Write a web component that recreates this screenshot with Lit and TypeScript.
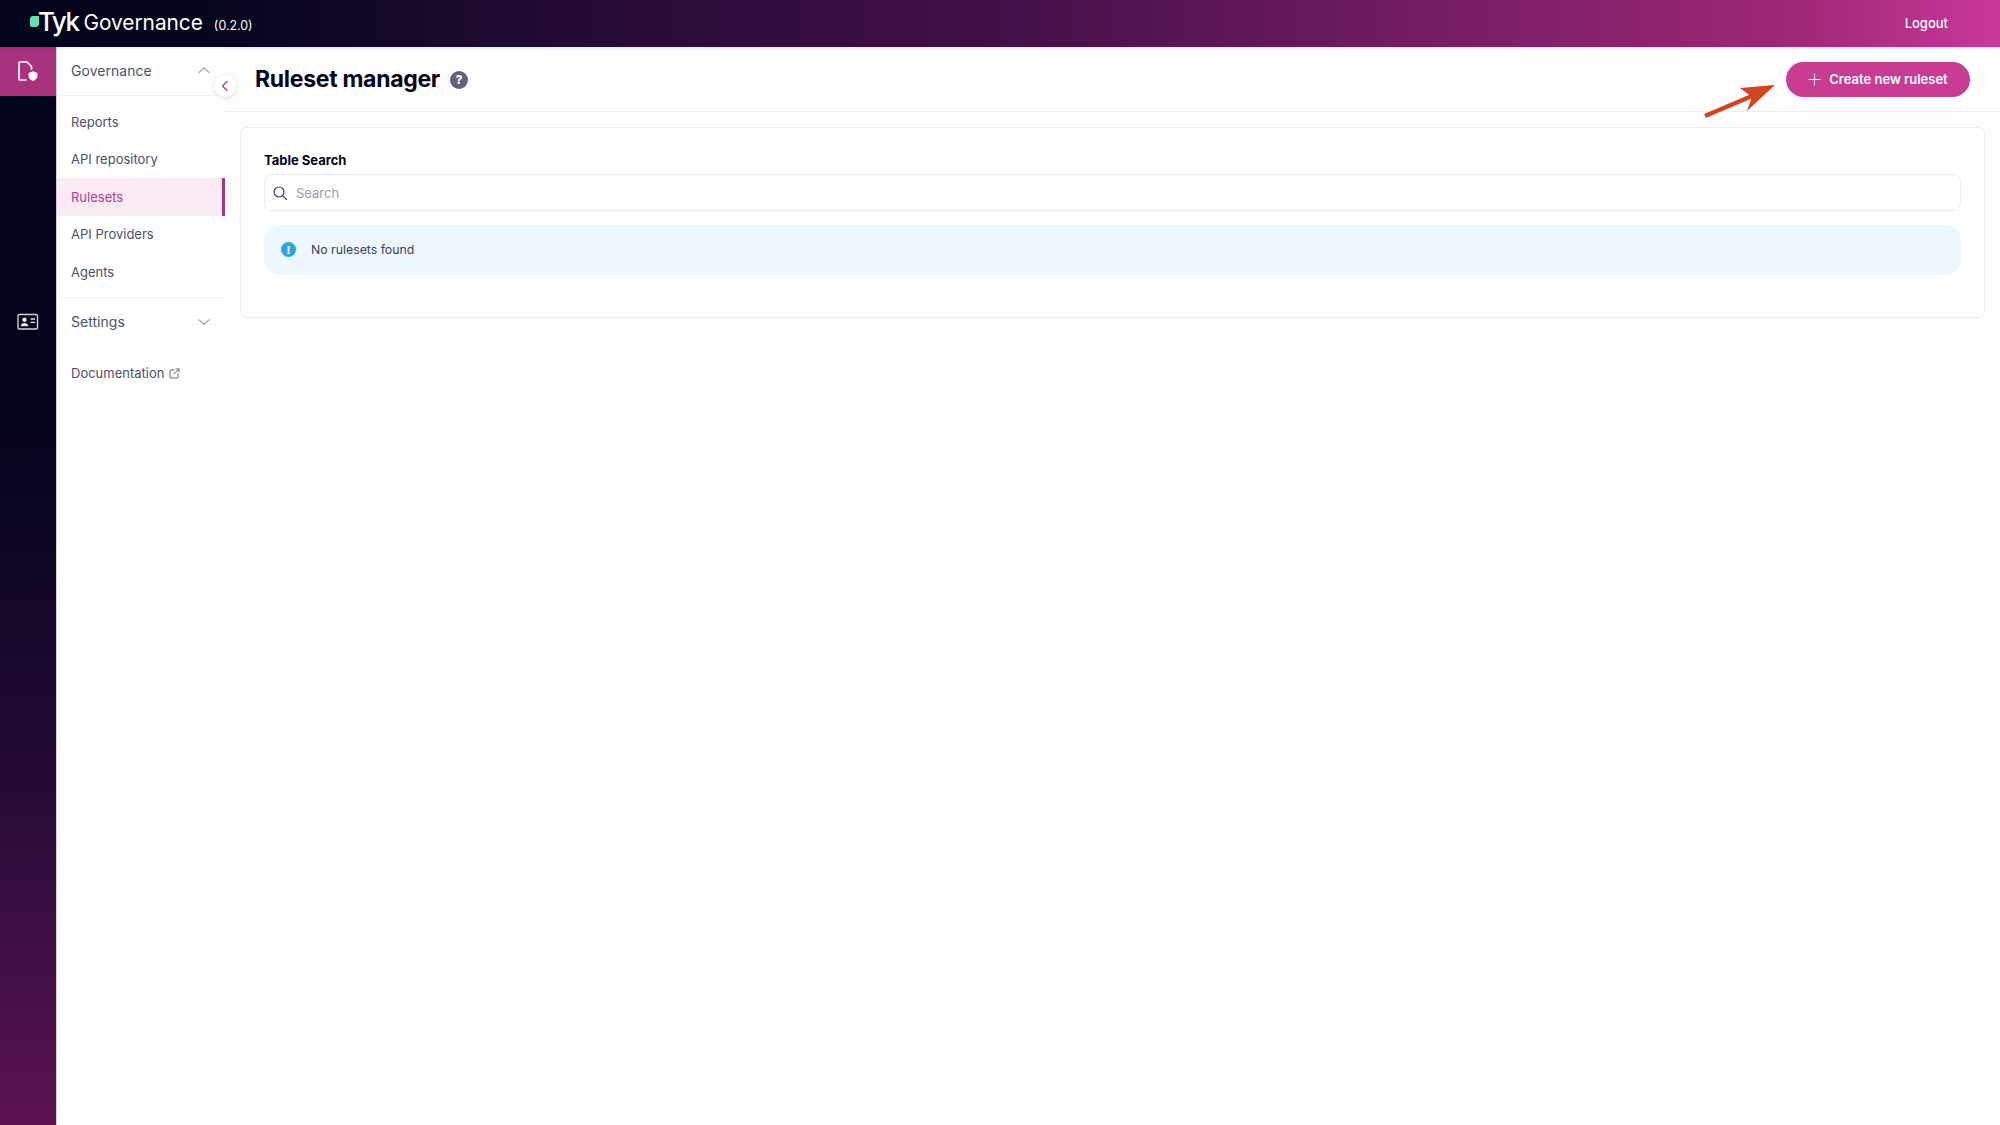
import { LitElement, html, css, svg } from "lit";
import { customElement } from "lit/decorators.js";

const chev = (up: boolean) => html`<svg class="chev" width="14" height="14" viewBox="0 0 14 14" fill="none" stroke="#a3a6b8" stroke-width="1.2" stroke-linecap="round" stroke-linejoin="round"><path d="${up ? "M2 9.5 7 4.8l5 4.7" : "M2 4.8l5 4.7 5-4.7"}"/></svg>`;

@customElement("app-root")
export class AppRoot extends LitElement {
  static styles = css`
    :host { display: block; height: 1125px; overflow: hidden; font-family: Inter, "Liberation Sans", sans-serif; position: relative; background: #fdfdfd; }
    .page { display: grid; grid-template-rows: 47px 1fr; height: 100%; }
    .top { background: linear-gradient(90deg, #03031c 0%, #05041e 10%, #1e0a30 25%, #430f49 50%, #7c1f68 75%, #a02878 90%, #c9389a 100%); display: flex; align-items: center; padding-left: 30px; padding-right: 52px; color: #fff; box-shadow: 0 1px 3px rgba(0,0,0,.12); z-index: 2; }
    .logo { display: flex; align-items: center; }
    .leaf { margin-right: -1px; margin-top: -5px; }
    .tyk { font-size: 26px; font-weight: 500; letter-spacing: -1.5px; line-height: 30px; margin-top: -3px; }
    .gov { font-size: 20.8px; font-weight: 400; margin-left: 5px; line-height: 30px; margin-top: -1px; }
    .ver { font-size: 12.4px; margin-left: 11px; margin-top: 3px; }
    .logout { margin-left: auto; font-size: 13px; font-weight: 500; margin-top: -1px; }
    .body { display: grid; grid-template-columns: 56px 169px 1fr; min-height: 0; }
    .rail { background: linear-gradient(180deg, #03031c 0%, #03031c 33%, #220a35 67%, #5c1350 100%); display: flex; flex-direction: column; }
    .rail-sec { height: 251px; }
    .rail-item { height: 48px; display: flex; align-items: center; justify-content: center; }
    .rail-item.active { background: #a9327f; height: 49px; padding-right: 2px; padding-bottom: 2px; box-sizing: border-box; }
    .side { background: #fff; border-left: 1px solid #d0d0dc; box-sizing: border-box; display: flex; flex-direction: column; color: #4d5066; font-size: 13px; position: relative; z-index: 1; }
    .sec { height: 48px; display: flex; align-items: center; justify-content: space-between; padding: 0 14px 0 14px; font-size: 14px; border-bottom: 1px solid #f4f4f6; box-sizing: border-box; }
    .sec span { letter-spacing: .03px; }
    .top-sec { padding-bottom: 2px; height: 49px; }
    .items { display: flex; flex-direction: column; padding-top: 7px; padding-bottom: 7px; border-bottom: 1px solid #f4f4f6; height: 202px; box-sizing: border-box; }
    .item { height: 37.5px; flex: none; display: flex; align-items: center; padding-left: 14px; box-sizing: border-box; }
    .item.on { background: #faeaf4; color: #b83a8c; border-right: 3px solid #a9327f; }
    .sec.plain { border: none; padding-bottom: 1px; }
    .doc { display: flex; align-items: center; gap: 5px; padding: 19px 0 0 14px; }
    .toggle { position: absolute; right: -11px; top: 28px; width: 22px; height: 22px; border-radius: 50%; background: #fff; box-shadow: 0 1px 4px rgba(0,0,0,.14); display: flex; align-items: center; justify-content: center; }
    .main { min-width: 0; display: flex; flex-direction: column; background: #fdfdfd; }
    .head { height: 65px; display: flex; align-items: center; border-bottom: 1px solid #ececef; padding: 0 30px 0 30px; box-sizing: border-box; flex: none; }
    h1 { margin: 0; font-size: 23px; font-weight: 700; color: #03031c; letter-spacing: -.3px; }
    .help { margin: 1px 0 0 10px; width: 18px; height: 18px; border-radius: 50%; background: #62627f; color: #fff; font-size: 12px; font-weight: 800; display: flex; align-items: center; justify-content: center; }
    .btn { margin-left: auto; height: 35px; width: 184px; border-radius: 18px; background: #c93c93; color: #fff; font-size: 13px; font-weight: 600; display: flex; align-items: center; justify-content: center; gap: 8px; }
    .card { margin: 15px 15px 0 15px; background: #fff; border: 1px solid #ececef; border-radius: 7px; height: 191px; box-sizing: border-box; padding: 24px 23px 0; }
    label { display: block; font-size: 13px; font-weight: 700; color: #03031c; line-height: 16px; }
    .search { margin-top: 6px; height: 37px; border: 1px solid #ececef; border-radius: 8px; background: #fff; display: flex; align-items: center; gap: 8px; padding-left: 7px; font-size: 13px; color: #9b9bb0; box-sizing: border-box; }
    .alert { margin-top: 14px; height: 50px; border-radius: 16px; background: #eef7fe; display: flex; align-items: center; padding: 0 0 1px 17px; gap: 15px; font-size: 12.3px; color: #3d405a; box-sizing: border-box; }
    .i { width: 15px; height: 15px; border-radius: 50%; background: #2ea3ea; color: #fff; font-size: 11px; font-weight: 800; display: flex; align-items: center; justify-content: center; }
    .arrow { position: absolute; left: 1700px; top: 78px; z-index: 3; }
  `;

  render() {
    return html`
      <div class="page">
        <header class="top">
          <div class="logo">
            <svg class="leaf" width="9" height="11" viewBox="0 0 9 11"><path d="M3 0H9v7.500C9 9.500 7.600 11 5.500 11H2C.8 11 0 10.200 0 9V3C0 1.200 1.200 0 3 0Z" fill="#5fe3b0"/></svg>
            <span class="tyk">Tyk</span>
            <span class="gov">Governance</span>
            <span class="ver">(0.2.0)</span>
          </div>
          <span class="logout">Logout</span>
        </header>
        <div class="body">
          <nav class="rail">
            <div class="rail-sec">
              <div class="rail-item active">
                <svg width="24" height="24" viewBox="0 0 24 24" fill="none" stroke="#fff" stroke-width="1.700" stroke-linejoin="round" stroke-linecap="round"><path d="M11 21H5a1 1 0 0 1-1-1V4a1 1 0 0 1 1-1h7l4.500 4.500v2.500"/><path d="M18 13l4 1.200v2.600c0 2.600-1.600 3.700-4 4.700-2.400-1-4-2.100-4-4.700v-2.600l4-1.200Z" fill="#fff" stroke-width="1"/></svg>
              </div>
            </div>
            <div class="rail-item">
              <svg width="24" height="20" viewBox="0 0 24 20" fill="none"><rect x="2" y="2.500" width="19.500" height="14.500" rx="1.500" stroke="#d5d5de" stroke-width="1.400"/><circle cx="8.500" cy="7.800" r="2.200" fill="#e8e8ee"/><path d="M4.700 14.200c.2-2.200 1.800-3.200 3.800-3.200s3.600 1 3.800 3.200Z" fill="#e8e8ee"/><path d="M14.500 7H19M14.500 10.400H19" stroke="#e8e8ee" stroke-width="1.400"/></svg>
            </div>
          </nav>
          <aside class="side">
            <div class="sec top-sec"><span>Governance</span>${chev(true)}</div>
            <div class="items">
              <div class="item">Reports</div>
              <div class="item">API repository</div>
              <div class="item on">Rulesets</div>
              <div class="item">API Providers</div>
              <div class="item">Agents</div>
            </div>
            <div class="sec plain"><span>Settings</span>${chev(false)}</div>
            <div class="doc">Documentation
              <svg width="11" height="11" viewBox="0 0 11 11" fill="none" stroke="#62657a" stroke-width="1" stroke-linecap="round" stroke-linejoin="round"><path d="M5 2H2a1 1 0 0 0-1 1v6a1 1 0 0 0 1 1h6a1 1 0 0 0 1-1V6M7 1h3v3M10 1 5 6"/></svg>
            </div>
            <div class="toggle">
              <svg width="10" height="12" viewBox="0 0 10 12" fill="none" stroke="#b83a8c" stroke-width="1.300" stroke-linecap="round" stroke-linejoin="round"><path d="M7 1.500 2.500 6 7 10.500"/></svg>
            </div>
          </aside>
          <main class="main">
            <div class="head">
              <h1>Ruleset manager</h1>
              <span class="help">?</span>
              <div class="btn">
                <svg width="13" height="13" viewBox="0 0 13 13" stroke="#fff" stroke-width="1.200" stroke-linecap="round"><path d="M6.500 1v11M1 6.500h11"/></svg>
                Create new ruleset
              </div>
            </div>
            <section class="card">
              <label>Table Search</label>
              <div class="search">
                <svg width="16" height="16" viewBox="0 0 16 16" fill="none" stroke="#3d405a" stroke-width="1.200" stroke-linecap="round"><circle cx="7" cy="7" r="5"/><path d="m10.800 10.800 3.700 3.700"/></svg>
                Search
              </div>
              <div class="alert"><span class="i">!</span>No rulesets found</div>
            </section>
          </main>
        </div>
      </div>
      <svg class="arrow" width="80" height="45" viewBox="0 0 80 45">
        ${svg`<path d="M5 38 52 18" stroke="#d1451f" stroke-width="4.500"/><path d="M75 7 40 10 52 19 47 33Z" fill="#d1451f"/>`}
      </svg>
    `;
  }
}
